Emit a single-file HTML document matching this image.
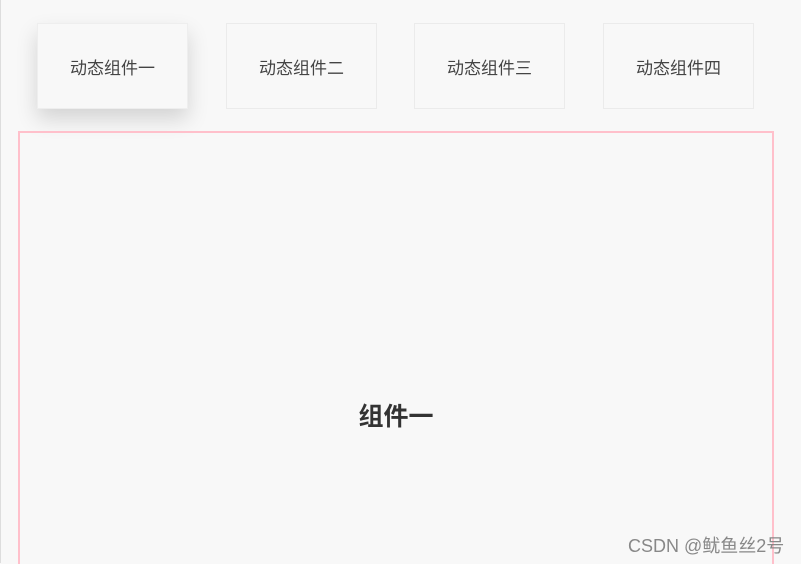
<!DOCTYPE html>
<html><head><meta charset="utf-8"><style>
html,body{margin:0;padding:0;width:801px;height:563px;overflow:hidden;background:#f8f8f8;font-family:"Liberation Sans","Noto Sans CJK SC",sans-serif;}
.lb{position:absolute;left:0;top:0;width:1px;height:563px;background:#ddd}
.c{position:absolute;top:23px;width:149px;height:84px;border:1px solid #ebebeb;box-sizing:content-box;display:flex;align-items:center;justify-content:center;font-size:17px;color:#444;background:#f8f8f8}
.c.a{box-shadow:0 10px 20px rgba(0,0,0,0.15);border-color:#eee}
.box{position:absolute;left:18px;top:131px;width:752px;height:431px;border:2px solid #ffc0cb;border-bottom:none}
.t{position:absolute;left:0;width:100%;top:264px;text-align:center;font-size:25px;font-weight:bold;color:#333}
.w{position:absolute;left:628px;top:532px;font-size:18px;color:#888}
</style></head><body>
<div class="lb"></div>
<div class="c a" style="left:37px">动态组件一</div>
<div class="c" style="left:226px">动态组件二</div>
<div class="c" style="left:414px">动态组件三</div>
<div class="c" style="left:603px">动态组件四</div>
<div class="box"><div class="t">组件一</div></div>
<div class="w">CSDN @鱿鱼丝2号</div>
</body></html>
